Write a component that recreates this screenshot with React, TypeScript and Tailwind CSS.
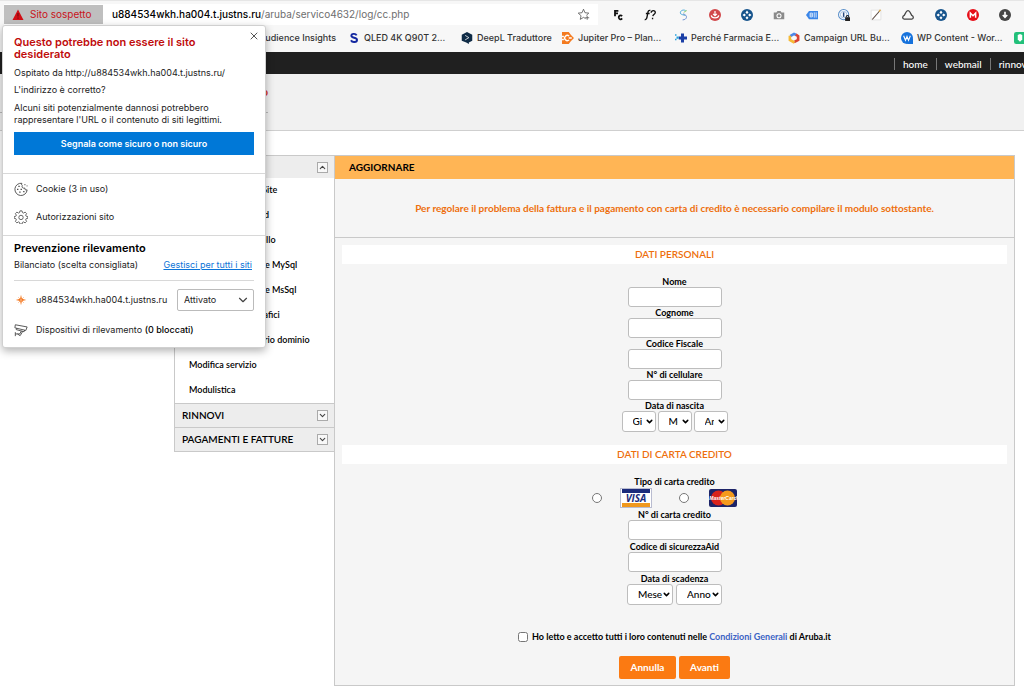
import React from 'react';
import { ChevronDown, ChevronUp, X } from 'lucide-react';

const toolbarIcons: { name: string; art: React.ReactNode }[] = [
  {
    name: 'FC',
    art: (
      <g fill="none" stroke="#111" strokeWidth="2.400">
        <path d="M4 9.500V2.500h4.500M4 5.800h4" />
        <path d="M13.500 9.500c-2-2-5-.5-4.500 2 .5 2.500 3 3 4.500 1" />
      </g>
    ),
  },
  {
    name: 'WhatFont',
    art: (
      <g fill="none" stroke="#111" strokeWidth="1.800">
        <path d="M1 14c3 1 3-4 4-8.500C5.500 2.500 6.500 1.500 8.500 2M2.500 6h5" />
        <path d="M9.500 5c.5-4 6-3.500 5.500 0-.3 2-2.800 2-3.200 4.500M11.400 11.500v2" />
      </g>
    ),
  },
  {
    name: 'Swirl',
    art: (
      <g fill="none" strokeWidth="1.300">
        <path d="M11.500 2C7 0 3 3.500 5 6.500c1 1 4 1.500 6 2" stroke="#49a9d8" />
        <path d="M8 6.500c7 1.500 5.500 8-.5 8" stroke="#6a8fd0" />
        <path d="M9 4.500L13 2" stroke="#8ccf6d" />
      </g>
    ),
  },
  {
    name: 'Download red',
    art: (
      <g>
        <circle cx="8" cy="8" r="8" fill="#d1484b" />
        <path d="M8 2.500V9M5.500 6.500L8 9l2.500-2.500M3 8.500c.5 4.500 9.500 4.500 10 0" fill="none" stroke="#fff" strokeWidth="1.600" />
      </g>
    ),
  },
  { name: 'Target one', art: <Target /> },
  {
    name: 'Camera',
    art: (
      <g>
        <path d="M1 4.500h3.500L6 2.500h4l1.500 2H15v9H1z" fill="#8a8a8a" />
        <circle cx="8" cy="9" r="3.400" fill="#fff" />
        <circle cx="8" cy="9" r="2" fill="#8a8a8a" />
      </g>
    ),
  },
  {
    name: 'Tag',
    art: (
      <g>
        <path d="M0 8l4-5.500h12v11H4z" fill="#3b86e8" />
        <path d="M5.500 5.500h3v5h-3zM5.500 8h3M11 4.500v7M13.500 4.500v7" fill="none" stroke="#fff" />
      </g>
    ),
  },
  {
    name: 'Password lock',
    art: (
      <g>
        <circle cx="7.500" cy="7.500" r="6.800" fill="#fff" stroke="#5a8fc9" strokeWidth="1.400" />
        <circle cx="7.500" cy="7.500" r="4.300" fill="none" stroke="#86aeda" />
        <path d="M7.500 4.500v6" stroke="#244a80" strokeWidth="2" />
        <path d="M9.500 11H16v5H9.500z" fill="#222" />
        <path d="M11 11c0-3 3.500-3 3.500 0" fill="none" stroke="#222" strokeWidth="1.400" />
      </g>
    ),
  },
  {
    name: 'Pencil',
    art: (
      <g fill="none">
        <path d="M1.500 1.500h13v13h-13z" fill="#fff" stroke="#ddd" />
        <path d="M3 14L12.500 3" stroke="#5b4a42" strokeWidth="1.500" />
        <path d="M12 3.500L14 1" stroke="#d9a13d" strokeWidth="1.800" />
      </g>
    ),
  },
  {
    name: 'Cloud',
    art: (
      <path d="M3 13.500C0 13 .5 9.500 3 8.500L5.500 4C7 1.500 9 1.500 10.500 4L13 8.500c2.500 1 3 4.500 0 5z" fill="none" stroke="#444" strokeWidth="1.700" />
    ),
  },
  { name: 'Target two', art: <Target /> },
  {
    name: 'Mega',
    art: (
      <g>
        <circle cx="8" cy="8" r="8" fill="#e60f19" />
        <path d="M4.500 11.500v-6L8 9l3.500-3.500v6" fill="none" stroke="#fff" strokeWidth="2" />
      </g>
    ),
  },
  {
    name: 'Download',
    art: (
      <g>
        <circle cx="8" cy="8" r="8" fill="#454545" />
        <path d="M8 3.500v7M5 8l3 3 3-3" fill="none" stroke="#fff" strokeWidth="2.200" />
      </g>
    ),
  },
];

const bookmarks: { label: string; art: React.ReactNode; width: string }[] = [
  {
    label: 'QLED 4K Q90T 2...',
    width: 'w-[113px]',
    art: <path d="M11.500 4.500C10 1.500 4.500 2 4.500 5c0 3.500 7.500 2 7.500 5.500 0 3.500-6.500 4-8 .5" fill="none" stroke="#1428a0" strokeWidth="2.600" />,
  },
  {
    label: 'DeepL Traduttore',
    width: 'w-[101px]',
    art: (
      <g>
        <path d="M8 0l7 3.500v8L10.500 14v2L7 14l-6-2.500v-8z" fill="#0f2b46" />
        <path d="M5.500 4.500l5 3-5 3" fill="none" stroke="#fff" />
      </g>
    ),
  },
  {
    label: 'Jupiter Pro – Plan...',
    width: 'w-[113px]',
    art: (
      <g>
        <path d="M0 0h9l3 4 4 4-4 4-3 4H0z" fill="#f47b20" />
        <path d="M9.500 5.500a3.500 3.500 0 1 0 0 5M9 8h4" fill="none" stroke="#fff" strokeWidth="1.800" />
        <path d="M0 5h2.500v2H0zM0 9h2.500v2H0z" fill="#fff" />
      </g>
    ),
  },
  {
    label: 'Perché Farmacia E...',
    width: 'w-[113px]',
    art: (
      <g>
        <path d="M8 2h4v4h4v4h-4v4H8v-4H5V6h3z" fill="#1b3fa6" />
        <path d="M0 3h2v2H0zM2 6h3v3H2zM0 9h2v2H0z" fill="#27a1dc" />
      </g>
    ),
  },
  {
    label: 'Campaign URL Bu...',
    width: 'w-[113px]',
    art: (
      <g fill="none" strokeWidth="3.500">
        <path d="M3 5.500L8 2.500l3 1.500" stroke="#4b87e8" />
        <path d="M10.500 3.500l3 2V10.500L8 13.500" stroke="#d94334" />
        <path d="M2.500 5v5.500l6 3.500" stroke="#f6ba35" />
      </g>
    ),
  },
  {
    label: 'WP Content - Wor...',
    width: 'w-[113px]',
    art: (
      <g>
        <circle cx="8" cy="8" r="8" fill="#1672dc" />
        <path d="M9 9h7v7H9z" fill="#1672dc" />
        <path d="M3.500 5L6 11l2-5 2 5 2.500-6" fill="none" stroke="#fff" strokeWidth="1.500" />
      </g>
    ),
  },
  {
    label: '',
    width: 'w-3',
    art: (
      <g>
        <rect width="16" height="16" rx="3" fill="#22c07a" />
        <path d="M5 4l3-1.500L11 4v6l-3 3-3-3z" fill="#fff" />
      </g>
    ),
  },
];

const menuItems = [
  'Gestione del Web Site',
  'Cambio di password',
  'Strumenti di controllo',
  'Gestione database e MySql',
  'Gestione database e MsSql',
  'Contatori, dati e grafici',
  'Cambia il proprietario dominio',
  'Modifica servizio',
  'Modulistica',
];

const personalFields = [
  { id: 'nome', label: 'Nome' },
  { id: 'cognome', label: 'Cognome' },
  { id: 'cf', label: 'Codice Fiscale' },
  { id: 'cell', label: 'N° di cellulare' },
];

function Target() {
  return (
    <g>
      <circle cx="8" cy="8" r="8" fill="#17548c" />
      <path d="M8 2l2 2.500-2 2-2-2zM8 14l2-2.500-2-2-2 2zM2 8l2.500-2 2 2-2 2zM14 8l-2.500-2-2 2 2 2z" fill="#fff" />
    </g>
  );
}

function Field({ id, label }: { id: string; label: string }) {
  return (
    <div className="flex flex-col items-center">
      <label htmlFor={id} className="text-[9px] leading-[11px] font-bold">{label}</label>
      <input id={id} type="text" className="h-5 w-[94px] rounded-[3px] border border-[#bdbdbd] bg-white px-1" />
    </div>
  );
}

function SmallSelect({ label, className }: { label: string; className: string }) {
  return (
    <div className="relative">
      <select
        aria-label={label}
        className={`block h-[21px] appearance-none rounded-[3px] border border-[#bdbdbd] bg-white pl-2.5 text-[10px] font-medium ${className}`}
      >
        <option>{label}</option>
      </select>
      <ChevronDown className="pointer-events-none absolute right-0.5 top-[6px] h-[9px] w-[9px]" strokeWidth={4} />
    </div>
  );
}

function SectionTitle({ children }: { children: React.ReactNode }) {
  return (
    <h2 className="mx-[7px] bg-white text-center text-[10px] leading-[19px] font-semibold text-[#ee6f0c]">{children}</h2>
  );
}

function SideHeader({ label, open }: { label: string; open?: boolean }) {
  const Icon = open ? ChevronUp : ChevronDown;
  return (
    <button
      type="button"
      className={`flex w-full items-center justify-between border-t border-[#c9c9c9] bg-[#ededed] pl-[7px] pr-[6px] text-[10px] font-semibold ${open ? 'h-[23px]' : 'h-6'}`}
    >
      {label}
      <span className="flex h-[11px] w-[11px] items-center justify-center border border-[#aaa] bg-[#f8f8f8]">
        <Icon className="h-[9px] w-[9px] text-[#444]" strokeWidth={3} />
      </span>
    </button>
  );
}

function WarningPopup() {
  return (
    <section className="absolute left-[2px] top-[25px] w-[264px] rounded-[3px] border border-[#d0d0d0] bg-white font-['Inter',sans-serif] text-[9px] leading-3 text-[#222] shadow-[0_3px_9px_rgba(0,0,0,0.3)]">
      <button type="button" aria-label="Chiudi" className="absolute right-[5px] top-1">
        <X className="h-3 w-3 text-[#555]" strokeWidth={2} />
      </button>
      <div className="px-[11px] pt-2.5 pb-[18px]">
        <h1 className="w-[200px] text-[11px] leading-3 font-semibold text-[#c00b0b]">
          Questo potrebbe non essere il sito
          <br />
          desiderato
        </h1>
        <p className="mt-[7px]">Ospitato da http://u884534wkh.ha004.t.justns.ru/</p>
        <p className="mt-[5px]">L'indirizzo è corretto?</p>
        <p className="mt-[6px]">
          Alcuni siti potenzialmente dannosi potrebbero
          <br />
          rappresentare l'URL o il contenuto di siti legittimi.
        </p>
        <button type="button" className="mt-[6px] h-[23px] w-full bg-[#0078d7] font-semibold text-white">
          Segnala come sicuro o non sicuro
        </button>
      </div>
      <div className="border-y border-[#d8d8d8] px-[11px] pt-px pb-1">
        <a href="#cookie" className="flex h-7 items-center gap-2">
          <svg viewBox="0 0 16 16" className="h-3.5 w-3.5" fill="none" stroke="#444">
            <path d="M9 1.500A7 7 0 1 0 15 9c-2 .5-3-.5-2.500-2C10 7.500 8.500 6 9.500 4 8.500 3.500 8.500 2.500 9 1.500z" />
            <path d="M5 5h1.500M3.500 8.500H5M7.500 8.500H9M6 11.500h1.500M10.500 11H12M12 3h1M14.500 4.500h.8" strokeWidth="1.500" />
          </svg>
          Cookie (3 in uso)
        </a>
        <a href="#autorizzazioni" className="flex h-7 items-center gap-2">
          <svg viewBox="0 0 16 16" className="h-3.5 w-3.5" fill="none" stroke="#555">
            <path d="M6.800 1h2.400l.5 2 1.200.5 1.800-1.100 1.700 1.700-1.100 1.800.5 1.100 2 .5v2l-2 .5-.5 1.200 1.100 1.800-1.700 1.700-1.800-1.100-1.200.5-.5 2H6.800l-.5-2-1.200-.5-1.800 1.100L1.600 13l1.100-1.800-.5-1.200-2-.5v-2l2-.5.5-1.100-1.100-1.800 1.700-1.700 1.800 1.100 1.200-.5z" />
            <circle cx="8" cy="8.500" r="2.500" />
          </svg>
          Autorizzazioni sito
        </a>
      </div>
      <div className="px-[11px] pt-[6px] pb-[11px]">
        <h2 className="text-[11px] leading-3 font-semibold text-black">Prevenzione rilevamento</h2>
        <div className="mt-[5px] flex justify-between border-b border-[#d8d8d8] pb-[9px]">
          <span>Bilanciato (scelta consigliata)</span>
          <a href="#gestisci" className="pr-0.5 text-[#0b74d8] underline">Gestisci per tutti i siti</a>
        </div>
        <div className="mt-2 flex items-center gap-2">
          <svg viewBox="0 0 16 16" className="h-3.5 w-3.5">
            <path d="M8 2l1 4.500L14 8l-5 1-1 5-1-5-5-1 5-1.500z" fill="#f47216" />
            <path d="M5 5l6 6M11 5l-6 6" stroke="#f7a56b" />
          </svg>
          <label htmlFor="tracking" className="flex-1 whitespace-nowrap">u884534wkh.ha004.t.justns.ru</label>
          <div className="relative w-[77px]">
            <select id="tracking" className="block h-[22px] w-full appearance-none rounded-[2px] border border-[#bbb] bg-white pl-[6px]">
              <option>Attivato</option>
            </select>
            <ChevronDown className="pointer-events-none absolute right-1 top-1 h-3.5 w-3.5 text-[#444]" strokeWidth={2} />
          </div>
        </div>
        <div className="mt-[13px] flex h-3 items-center gap-2">
          <svg viewBox="0 0 16 16" className="h-3.5 w-3.5" fill="none" stroke="#444">
            <path d="M1.500 2l13.500 2.500-1.500 4L1 5.500zM3 6l-.5 1.500 9 2.500.7-2M8.500 9L6.500 12.500h-5M1.500 10.500V15M4 12.500l3 2 3-5" />
          </svg>
          <span>Dispositivi di rilevamento <span className="font-medium text-black">(0 bloccati)</span></span>
        </div>
      </div>
    </section>
  );
}

export default function App() {
  return (
    <div className="relative min-h-screen overflow-hidden bg-white font-['Lato',sans-serif] text-black">
      {/* Browser chrome */}
      <div className="border-t border-[#e6e6e6] bg-[#f7f7f7] font-['Inter',sans-serif]">
        <div className="flex items-center pt-[3px] pl-1 pr-[13px]">
          <div className="flex h-[21px] w-[594px] items-center bg-white pr-2">
            <span className="flex h-[19px] w-[99px] items-center gap-[6px] bg-[#bfbfbf] pl-2 text-[10px] text-[#c8141b]">
              <svg viewBox="0 0 12 12" className="h-3 w-3">
                <path d="M6 .5L11.500 11H.5z" fill="#d10f16" />
                <path d="M6 4v3.500M6 8.500v1.200" stroke="#7a0d10" strokeWidth="1.200" />
              </svg>
              Sito sospetto
            </span>
            <span className="flex-1 whitespace-nowrap pl-[9px] text-[10px] text-[#6e6e6e]">
              <span className="font-medium text-black">u884534wkh.ha004.t.justns.ru</span>/aruba/servico4632/log/cc.php
            </span>
            <button type="button" aria-label="Preferiti">
              <svg viewBox="0 0 16 16" className="h-[13px] w-[13px]" fill="none" stroke="#555">
                <path d="M10.500 13L8 11.500 4 14l1-4.500L1.500 6.300l4.700-.5L8 1.500l1.800 4.300 4.700.5L11.500 9M12.500 9.500v5M10 12h5" />
              </svg>
            </button>
          </div>
          <div className="ml-[14px] flex flex-1 justify-between">
            {toolbarIcons.map((icon) => (
              <button key={icon.name} type="button" aria-label={icon.name}>
                <svg viewBox="0 0 16 16" className="h-3 w-3">{icon.art}</svg>
              </button>
            ))}
          </div>
        </div>
        <div className="flex h-[27px] items-center overflow-hidden pb-px text-[9px] font-medium whitespace-nowrap text-[#333]">
          <a href="#audience" className="w-[336px] shrink-0 text-right">Audience Insights</a>
          <div className="flex pl-3">
            {bookmarks.map((b) => (
              <a key={b.label} href="#bookmark" aria-label={b.label || 'Preferito'} className={`flex shrink-0 items-center gap-1 ${b.width}`}>
                <svg viewBox="0 0 16 16" className="h-3 w-3 shrink-0">{b.art}</svg>
                {b.label}
              </a>
            ))}
          </div>
        </div>
      </div>

      {/* Site header */}
      <nav className="flex h-[22px] justify-end overflow-hidden bg-[#202020]">
        <div className="flex w-[130px] items-center gap-2 pt-0.5 text-[10px] leading-3 font-medium whitespace-nowrap text-white">
          <a href="#home" className="border-l border-[#777] pl-2">home</a>
          <a href="#webmail" className="border-l border-[#777] pl-2">webmail</a>
          <a href="#rinnovi" className="border-l border-[#777] pl-2">rinnovi</a>
        </div>
      </nav>
      <header className="h-[57px] border-b border-[#cfcfcf] bg-[#f1f1f1]">
        <div className="w-[268px] border-b border-[#bbb] pt-[11px] pb-[13px] text-right text-[11px] leading-[14px] font-bold text-[#d8352a]">
          Servizio
        </div>
      </header>

      <div className="mt-6 flex items-start pl-[174px] pr-[9px]">
        <aside className="w-[160px] shrink-0 border-b border-l border-[#c9c9c9]">
          <SideHeader label="GESTIONE" open />
          <ul>
            {menuItems.map((item) => (
              <li key={item} className="h-[25px] pl-[14px] text-[9px] leading-6 font-semibold whitespace-nowrap">
                <a href="#menu">{item}</a>
              </li>
            ))}
          </ul>
          <SideHeader label="RINNOVI" />
          <SideHeader label="PAGAMENTI E FATTURE" />
        </aside>

        <main className="flex-1 border border-[#c9c9c9] bg-[#f5f5f5]">
          <h1 className="bg-[#ffb555] pl-[14px] text-[10px] leading-[23px] font-bold">AGGIORNARE</h1>
          <p className="border-b border-[#c9c9c9] text-center text-[10px] leading-[58px] font-bold text-[#ee6f0c]">
            Per regolare il problema della fattura e il pagamento con carta di credito è necessario compilare il modulo sottostante.
          </p>
          <form className="pt-[7px] pb-[6px]" onSubmit={(e) => e.preventDefault()}>
            <SectionTitle>DATI PERSONALI</SectionTitle>
            <div className="mt-3">
              {personalFields.map((f) => (
                <Field key={f.id} id={f.id} label={f.label} />
              ))}
              <fieldset className="flex flex-col items-center">
                <legend className="mx-auto text-[9px] leading-[11px] font-bold">Data di nascita</legend>
                <div className="flex gap-0.5">
                  <SmallSelect label="Giorno" className="w-[34px] pr-[13px]" />
                  <SmallSelect label="Mese" className="w-[34px] pr-[13px]" />
                  <SmallSelect label="Anno" className="w-[34px] pr-[13px]" />
                </div>
              </fieldset>
            </div>

            <div className="mt-[13px]">
              <SectionTitle>DATI DI CARTA CREDITO</SectionTitle>
            </div>
            <div className="mt-3 flex flex-col gap-px">
              <fieldset>
                <legend className="mx-auto text-[9px] leading-[11px] font-bold">Tipo di carta credito</legend>
                <div className="flex h-[21px] items-center justify-center pr-5">
                  <input id="visa" type="radio" name="card" className="h-2.5 w-2.5" />
                  <label htmlFor="visa" className="ml-[18px]">
                    <svg viewBox="0 0 32 20" className="h-5 w-8" role="img" aria-label="Visa">
                      <rect x=".5" y=".5" width="31" height="19" fill="#fff" stroke="#b9bcd0" />
                      <rect x="2" y="1" width="28" height="4" fill="#1c2c7c" />
                      <rect x="2" y="15" width="28" height="4" fill="#f0981e" />
                      <text x="16" y="13.500" textAnchor="middle" fontSize="10" fontWeight="bold" fontStyle="italic" fontFamily="Open Sans" fill="#1c2c7c">VISA</text>
                    </svg>
                  </label>
                  <input id="mc" type="radio" name="card" className="ml-[27px] h-2.5 w-2.5" />
                  <label htmlFor="mc" className="ml-5">
                    <svg viewBox="0 0 28 18" className="h-[18px] w-7" role="img" aria-label="MasterCard">
                      <rect width="28" height="18" rx="2" fill="#1d2468" />
                      <circle cx="9.500" cy="9" r="7.500" fill="#d9231c" />
                      <circle cx="18.500" cy="9" r="7.500" fill="#f59a1c" />
                      <text x="14" y="11" textAnchor="middle" fontSize="5" fontWeight="bold" fontStyle="italic" fontFamily="Liberation Sans" fill="#fff">MasterCard</text>
                    </svg>
                  </label>
                </div>
              </fieldset>
              <Field id="numero" label="N° di carta credito" />
              <Field id="codice" label="Codice di sicurezzaAid" />
              <fieldset className="flex flex-col items-center">
                <legend className="mx-auto text-[9px] leading-[11px] font-bold">Data di scadenza</legend>
                <div className="flex gap-[3px]">
                  <SmallSelect label="Mese" className="w-[46px] pr-[9px]" />
                  <SmallSelect label="Anno" className="w-[46px] pr-[9px]" />
                </div>
              </fieldset>
            </div>

            <div className="mt-6 flex h-4 items-center justify-center gap-1 text-[9px] font-bold">
              <input id="accept" type="checkbox" className="h-2.5 w-2.5" />
              <label htmlFor="accept">
                Ho letto e accetto tutti i loro contenuti nelle{' '}
                <a href="#condizioni" className="text-[#3b63c4]">Condizioni Generali</a> di Aruba.it
              </label>
            </div>
            <div className="mt-[11px] flex justify-center gap-[3px] text-[10px] font-bold text-white">
              <button type="button" className="h-[23px] w-[57px] rounded-[2px] bg-[#fb7a12]">Annulla</button>
              <button type="button" className="h-[23px] w-[51px] rounded-[2px] bg-[#fb7a12]">Avanti</button>
            </div>
          </form>
        </main>
      </div>

      <WarningPopup />
    </div>
  );
}
